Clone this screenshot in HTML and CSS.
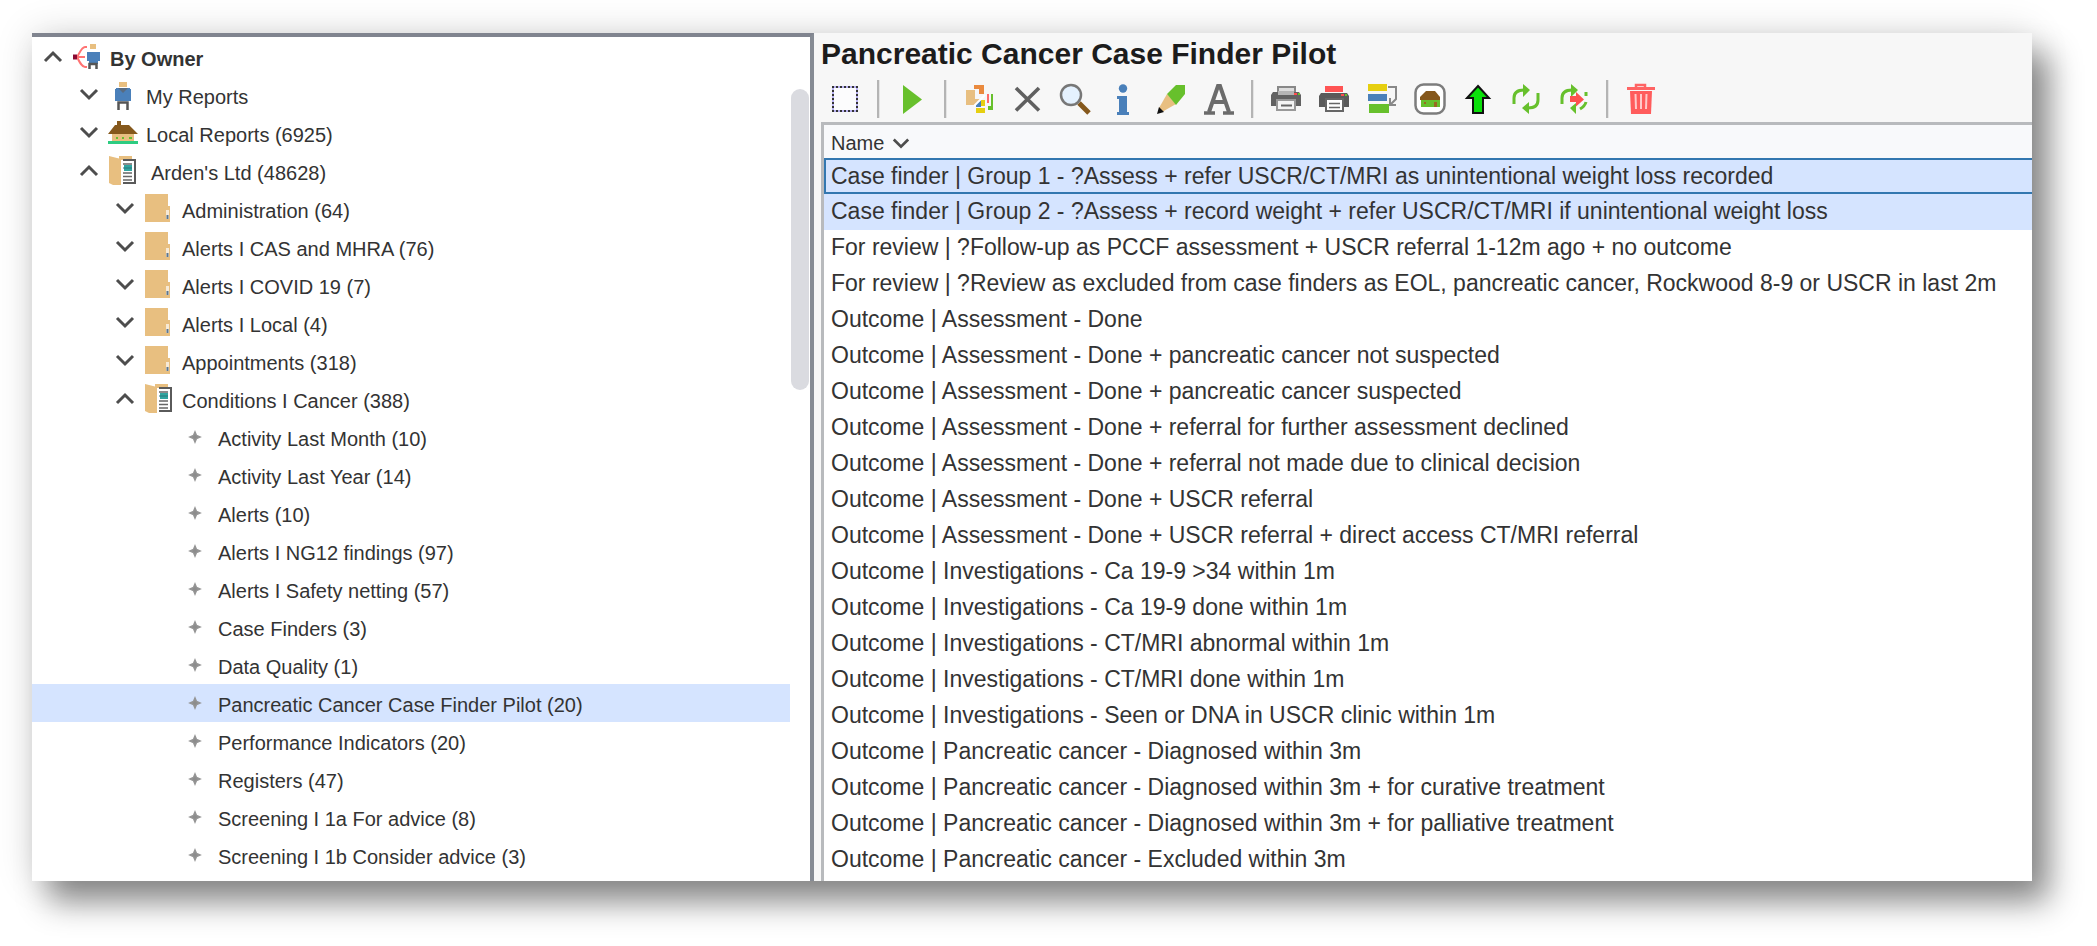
FILE: index.html
```
<!DOCTYPE html>
<html lang="en">
<head>
<meta charset="utf-8">
<title>Pancreatic Cancer Case Finder Pilot</title>
<link rel="stylesheet" href="styles.css">
</head>
<body>
<svg class="defs" aria-hidden="true">
  <symbol id="down" viewBox="0 0 20 20"><path d="M2 5l8 8 8-8" fill="none" stroke="#4d4d4d" stroke-width="3"/></symbol>
  <symbol id="up" viewBox="0 0 20 20"><path d="M2 14l8-8 8 8" fill="none" stroke="#4d4d4d" stroke-width="3"/></symbol>
  <symbol id="folder" viewBox="0 0 32 32"><path d="M2 1h23v12h2v16H2z" fill="#e8bf80"/><path d="M23 17h3v9h-3z" fill="#f7ead6"/><path d="M23.500 22h2v4h-2z" fill="#5b7690"/></symbol>
  <symbol id="open" viewBox="0 0 32 32"><path d="M12 1h13v5H12z" fill="#e8bf80"/><path d="M14 5h13v24H14z" fill="#fff"/><path d="M16 5h12v23H16" fill="none" stroke="#5a5a5a" stroke-width="2"/><path d="M2 1l12 3v26H6l-4-2z" fill="#e8bf80"/><path d="M16 9h9M16 18h9M16 21.500h9M16 25h9" stroke="#666" stroke-width="1.500"/><path d="M17 10h8v6h-8z" fill="#31a5a0"/><path d="M16 13h9" stroke="#28767a" stroke-width="1"/></symbol>
  <symbol id="leaf" viewBox="0 0 32 32"><path d="M16 11l1.500 3.500L21 16l-3.500 1.500L16 21l-1.500-3.500L11 16l3.500-1.500z" fill="#8c8c8c" stroke="#959595" stroke-width="1.500"/></symbol>
</svg>
<div class="window">
  <nav class="tree-pane" aria-label="Reports">
    <ul class="tree">
      <li class="row l0"><button class="toggle" aria-label="Collapse By Owner"><svg><use href="#up"/></svg></button><svg class="icon" viewBox="0 0 32 32"><path d="M16 6h-2c-3 0-5 5-8 10 3 6 5 10 8 10h2M6 16h8" fill="none" stroke="#ff7373" stroke-width="2"/><path d="M2 13.500h4v5H2z" fill="#8b0a32"/><path d="M19 3h6v5h-6z" fill="#e8bf80"/><path d="M16 11h13v9h-2v3h-9v-3h-2z" fill="#4a80ba"/><path d="M18.500 28v-5h7v5" fill="none" stroke="#555" stroke-width="2.500"/></svg><a class="label strong" href="#">By Owner</a></li>
      <li class="row l1"><button class="toggle" aria-label="Expand My Reports"><svg><use href="#down"/></svg></button><svg class="icon" viewBox="0 0 32 32"><path d="M12 3h8v5h-8z" fill="#e8bf80"/><path d="M9 9h14v1h1v12H8V10h1z" fill="#4a80ba"/><path d="M11 9l5 5 5-5z" fill="#596b80"/><path d="M11.500 31v-7.500h9V31" fill="none" stroke="#555" stroke-width="2.500"/></svg><a class="label" href="#">My Reports</a></li>
      <li class="row l1"><button class="toggle" aria-label="Expand Local Reports"><svg><use href="#down"/></svg></button><svg class="icon" viewBox="0 0 32 32"><path d="M5 17h22v8H5z" fill="#e8bf80"/><path d="M1 17L8 8h2V4h4v4h8l9 9z" fill="#85581c"/><path d="M9 21h2M15 21h2M22 21h3" stroke="#67bf2e" stroke-width="2"/><path d="M1 24h30v3H1z" fill="#2dcc81"/></svg><a class="label" href="#">Local Reports (6925)</a></li>
      <li class="row l1"><button class="toggle" aria-label="Collapse Arden's Ltd"><svg><use href="#up"/></svg></button><svg class="icon wide"><use href="#open"/></svg><a class="label" href="#">Arden's Ltd (48628)</a></li>
      <li class="row l2"><button class="toggle" aria-label="Expand Administration"><svg><use href="#down"/></svg></button><svg class="icon"><use href="#folder"/></svg><a class="label" href="#">Administration (64)</a></li>
      <li class="row l2"><button class="toggle" aria-label="Expand Alerts I CAS and MHRA"><svg><use href="#down"/></svg></button><svg class="icon"><use href="#folder"/></svg><a class="label" href="#">Alerts I CAS and MHRA (76)</a></li>
      <li class="row l2"><button class="toggle" aria-label="Expand Alerts I COVID 19"><svg><use href="#down"/></svg></button><svg class="icon"><use href="#folder"/></svg><a class="label" href="#">Alerts I COVID 19 (7)</a></li>
      <li class="row l2"><button class="toggle" aria-label="Expand Alerts I Local"><svg><use href="#down"/></svg></button><svg class="icon"><use href="#folder"/></svg><a class="label" href="#">Alerts I Local (4)</a></li>
      <li class="row l2"><button class="toggle" aria-label="Expand Appointments"><svg><use href="#down"/></svg></button><svg class="icon"><use href="#folder"/></svg><a class="label" href="#">Appointments (318)</a></li>
      <li class="row l2"><button class="toggle" aria-label="Collapse Conditions I Cancer"><svg><use href="#up"/></svg></button><svg class="icon"><use href="#open"/></svg><a class="label" href="#">Conditions I Cancer (388)</a></li>
      <li class="row l3"><svg class="icon"><use href="#leaf"/></svg><a class="label" href="#">Activity Last Month (10)</a></li>
      <li class="row l3"><svg class="icon"><use href="#leaf"/></svg><a class="label" href="#">Activity Last Year (14)</a></li>
      <li class="row l3"><svg class="icon"><use href="#leaf"/></svg><a class="label" href="#">Alerts (10)</a></li>
      <li class="row l3"><svg class="icon"><use href="#leaf"/></svg><a class="label" href="#">Alerts I NG12 findings (97)</a></li>
      <li class="row l3"><svg class="icon"><use href="#leaf"/></svg><a class="label" href="#">Alerts I Safety netting (57)</a></li>
      <li class="row l3"><svg class="icon"><use href="#leaf"/></svg><a class="label" href="#">Case Finders (3)</a></li>
      <li class="row l3"><svg class="icon"><use href="#leaf"/></svg><a class="label" href="#">Data Quality (1)</a></li>
      <li class="row l3 current"><svg class="icon"><use href="#leaf"/></svg><a class="label" href="#" aria-current="true">Pancreatic Cancer Case Finder Pilot (20)</a></li>
      <li class="row l3"><svg class="icon"><use href="#leaf"/></svg><a class="label" href="#">Performance Indicators (20)</a></li>
      <li class="row l3"><svg class="icon"><use href="#leaf"/></svg><a class="label" href="#">Registers (47)</a></li>
      <li class="row l3"><svg class="icon"><use href="#leaf"/></svg><a class="label" href="#">Screening I 1a For advice (8)</a></li>
      <li class="row l3"><svg class="icon"><use href="#leaf"/></svg><a class="label" href="#">Screening I 1b Consider advice (3)</a></li>
    </ul>
    <div class="scroll"><div class="thumb"></div></div>
  </nav>
  <main class="content">
    <h1 class="title">Pancreatic Cancer Case Finder Pilot</h1>
    <div class="toolbar" role="toolbar" aria-label="Report actions">
      <button class="tool" aria-label="Select"><svg viewBox="0 0 32 32"><path d="M4 4h24v24H4z" fill="#fcfcfd" stroke="#b9b2f2" stroke-width="2"/><path d="M3 4h26M3 28h26M4 3v26M28 3v26" fill="none" stroke="#333" stroke-width="2" stroke-dasharray="2 2"/></svg></button>
      <span class="sep"></span>
      <button class="tool" aria-label="Run"><svg viewBox="0 0 32 32"><path d="M7 2l19 14.500L7 31z" fill="#67c02c"/></svg></button>
      <span class="sep"></span>
      <button class="tool" aria-label="Breakdown"><svg viewBox="0 0 32 32"><path d="M11 2h10v9h-5V6h-5z" fill="#ea8a3e"/><path d="M3 7h9v9h6l-6 6H3z" fill="#e8bf80"/><path d="M13 25h9v5h-9zM18 17h4v6h-4z" fill="#e6cf10"/><path d="M13 24v-4l5-4v8z" fill="#4a80ba"/><path d="M11 23l11-11" stroke="#fff" stroke-width="2"/><path d="M24 11h2v9h-2z" fill="#ff6b6b"/><path d="M28 11h2v16h-5v-4h3z" fill="#67c02c"/></svg></button>
      <button class="tool" aria-label="Remove"><svg viewBox="0 0 32 32"><path d="M5 5l23 22.500M28 5L5 27.500" stroke="#606060" stroke-width="3.600"/></svg></button>
      <button class="tool" aria-label="Search"><svg viewBox="0 0 32 32"><path d="M20 20l10 10" stroke="#85581c" stroke-width="5"/><circle cx="12" cy="12" r="10" fill="#e4f1fe" stroke="#777" stroke-width="2.500"/></svg></button>
      <button class="tool" aria-label="Information"><svg viewBox="0 0 32 32"><circle cx="16" cy="5.500" r="4.200" fill="#4a80ba"/><path d="M10 13h10v16h2v3H10v-3h2V16h-2z" fill="#4a80ba"/></svg></button>
      <button class="tool" aria-label="Edit"><svg viewBox="0 0 32 32"><path d="M4 25l8-14 9 10-14 8z" fill="#e8bf80"/><path d="M12 11l9-9h9v9l-9 11z" fill="#67c02c"/><path d="M2 31l2-7 5 5z" fill="#111"/></svg></button>
      <button class="tool" aria-label="Font"><svg viewBox="0 0 32 32"><path d="M6 29L15 3h2l9 26M10 19h12" fill="none" stroke="#6b6b6b" stroke-width="4"/><path d="M1 30h11M20 30h11" stroke="#6b6b6b" stroke-width="3.500"/></svg></button>
      <span class="sep"></span>
      <button class="tool" aria-label="Print"><svg viewBox="0 0 32 32"><path d="M8 10V4h17v6" fill="#ddd" stroke="#888" stroke-width="2"/><path d="M3 9h26l2 3v11H1V12z" fill="#626262"/><path d="M8 8h16v4H8z" fill="#b5b5b5"/><path d="M24 10h3v2h-3z" fill="#ff4d4d"/><path d="M28 10h2v2h-2z" fill="#67c02c"/><path d="M7 17h18v10H7z" fill="#f4f4f4" stroke="#999" stroke-width="2"/><path d="M11 22.500h11" stroke="#666" stroke-width="2"/></svg></button>
      <button class="tool" aria-label="Print selection"><svg viewBox="0 0 32 32"><path d="M7 3h18v6H7z" fill="#ff5454"/><path d="M3 10h26l2 3v11H1V13z" fill="#5a5a5a"/><path d="M23 11h3v2h-3z" fill="#ff4d4d"/><path d="M27 11h2v2h-2z" fill="#67c02c"/><path d="M8 16h17v12H8z" fill="#fff" stroke="#666" stroke-width="2"/><path d="M11 20.500h11M11 24.500h11" stroke="#666" stroke-width="1.500"/></svg></button>
      <button class="tool" aria-label="Order columns"><svg viewBox="0 0 32 32"><path d="M2 1h19v7H2z" fill="#e6cf10"/><path d="M2 11h19v7H2z" fill="#4a80ba"/><path d="M3 21h20v9H3z" fill="#67c02c"/><path d="M22 4h8v12l-5 5M24 15v7h6" fill="none" stroke="#888" stroke-width="2"/></svg></button>
      <button class="tool" aria-label="Organisation"><svg viewBox="0 0 32 32"><rect x="1.500" y="1.500" width="29" height="29" rx="8" fill="#fff" stroke="#7d7d7d" stroke-width="2.500"/><path d="M7 15h19v9H7z" fill="#67c02c"/><path d="M6 14l6-6h9l5 6v3H6z" fill="#85581c"/><path d="M20 19h3v5h-3zM10 19h2v2h-2z" fill="#9a6a20"/></svg></button>
      <button class="tool" aria-label="Move up"><svg viewBox="0 0 32 32"><path d="M16 3l11 12h-6v15H11V15H5z" fill="#0ae00a" stroke="#111" stroke-width="2"/></svg></button>
      <button class="tool" aria-label="Refresh"><svg viewBox="0 0 32 32"><path d="M4 21v-6q0-8 10-8M28 10v7q0 8-10 8" fill="none" stroke="#67c02c" stroke-width="3"/><path d="M13 1l7 6-7 7zM19 19l-7 6 7 6z" fill="#67c02c"/></svg></button>
      <button class="tool" aria-label="Refresh and send"><svg viewBox="0 0 32 32"><path d="M4 21v-6q0-8 10-8M28 9v4M28 19q-1 4-6 7" fill="none" stroke="#67c02c" stroke-width="3"/><path d="M13 1l7 6-7 7zM18 20l-6 5 6 6z" fill="#67c02c"/><path d="M12 13h6V9l8 7.500-8 7V19h-6z" fill="#ff5050"/></svg></button>
      <span class="sep"></span>
      <button class="tool" aria-label="Delete"><svg viewBox="0 0 32 32"><path d="M11 4V2h9v2" fill="none" stroke="#ff6464" stroke-width="2.500"/><path d="M2 4h28v3H2z" fill="#ff6464"/><path d="M5 8h22l-1 23H6z" fill="#ff5c5c"/><path d="M10.500 11l.5 15M16 11v15M21.500 11l-.5 15" stroke="#ffc9c9" stroke-width="2"/></svg></button>
    </div>
    <table class="list">
      <thead><tr><th scope="col"><button class="sort">Name<svg viewBox="0 0 20 20"><use href="#down"/></svg></button></th></tr></thead>
      <tbody>
        <tr class="selected focused"><td>Case finder | Group 1 - ?Assess + refer USCR/CT/MRI as unintentional weight loss recorded</td></tr>
        <tr class="selected"><td>Case finder | Group 2 - ?Assess + record weight + refer USCR/CT/MRI if unintentional weight loss</td></tr>
        <tr><td>For review | ?Follow-up as PCCF assessment + USCR referral 1-12m ago + no outcome</td></tr>
        <tr><td>For review | ?Review as excluded from case finders as EOL, pancreatic cancer, Rockwood 8-9 or USCR in last 2m</td></tr>
        <tr><td>Outcome | Assessment - Done</td></tr>
        <tr><td>Outcome | Assessment - Done + pancreatic cancer not suspected</td></tr>
        <tr><td>Outcome | Assessment - Done + pancreatic cancer suspected</td></tr>
        <tr><td>Outcome | Assessment - Done + referral for further assessment declined</td></tr>
        <tr><td>Outcome | Assessment - Done + referral not made due to clinical decision</td></tr>
        <tr><td>Outcome | Assessment - Done + USCR referral</td></tr>
        <tr><td>Outcome | Assessment - Done + USCR referral + direct access CT/MRI referral</td></tr>
        <tr><td>Outcome | Investigations - Ca 19-9 &gt;34 within 1m</td></tr>
        <tr><td>Outcome | Investigations - Ca 19-9 done within 1m</td></tr>
        <tr><td>Outcome | Investigations - CT/MRI abnormal within 1m</td></tr>
        <tr><td>Outcome | Investigations - CT/MRI done within 1m</td></tr>
        <tr><td>Outcome | Investigations - Seen or DNA in USCR clinic within 1m</td></tr>
        <tr><td>Outcome | Pancreatic cancer - Diagnosed within 3m</td></tr>
        <tr><td>Outcome | Pancreatic cancer - Diagnosed within 3m + for curative treatment</td></tr>
        <tr><td>Outcome | Pancreatic cancer - Diagnosed within 3m + for palliative treatment</td></tr>
        <tr><td>Outcome | Pancreatic cancer - Excluded within 3m</td></tr>
      </tbody>
    </table>
  </main>
</div>
</body>
</html>
```
FILE: styles.css
```
* { box-sizing: border-box; }
body {
  margin: 0;
  padding: 33px 65px 65px 32px;
  background: #fff;
  color: #333;
  font-family: "Liberation Sans", Arial, sans-serif;
  font-size: 20px;
}
.defs { position: absolute; width: 0; height: 0; }
button {
  display: flex;
  align-items: center;
  padding: 0;
  border: 0;
  background: none;
  color: inherit;
  font: inherit;
}
.window {
  display: grid;
  grid-template-columns: 391fr 609fr;
  background: #f7f7f7;
  box-shadow: 17px 21px 30px rgba(0, 0, 0, .44), 0 0 36px rgba(0, 0, 0, .14);
}
.tree-pane {
  display: flex;
  border-top: 4px solid #80848f;
  border-right: 4px solid #868b94;
  background: #fff;
}
.tree {
  flex: 1;
  min-width: 0;
  margin: 0;
  padding: 1px 0 6px;
  list-style: none;
}
.row {
  display: flex;
  align-items: center;
  height: 38px;
  padding-left: 11px;
}
.l1 { padding-left: 47px; }
.l2 { padding-left: 83px; }
.l3 { padding-left: 147px; }
.current { background: #d5e4ff; }
.toggle { width: 20px; height: 20px; margin-right: 8px; }
.toggle svg { width: 20px; height: 20px; }
.icon { flex: none; width: 32px; height: 32px; margin-right: 7px; }
.wide { margin-right: 12px; }
.label {
  padding-top: 4px;
  color: inherit;
  text-decoration: none;
  white-space: nowrap;
}
.strong { font-weight: bold; }
.scroll { width: 20px; padding: 52px 1px 0; }
.thumb { height: 301px; border-radius: 9px; background: #dadbe0; }
.content { min-width: 0; padding-left: 7px; }
.title {
  margin: 0;
  color: #1c1c1c;
  font-size: 30px;
  line-height: 42px;
}
.toolbar {
  display: flex;
  align-items: center;
  gap: 16px;
  height: 47px;
  padding-left: 8px;
}
.tool, .tool svg { width: 32px; height: 32px; }
.sep {
  width: 3px;
  height: 38px;
  border-right: 1px solid #e4e4e4;
  background: #b4b4b4;
}
.list {
  width: 100%;
  border: solid #b8babd;
  border-width: 3px 0 0 3px;
  border-spacing: 0;
  background: #fff;
}
.list th {
  height: 33px;
  padding: 4px 7px 0;
  background: #f8f9fb;
  font-weight: normal;
}
.sort { gap: 8px; }
.sort svg { width: 18px; height: 18px; }
.list td {
  height: 36px;
  padding: 0 7px 2px;
  font-size: 23px;
  line-height: 32px;
  white-space: nowrap;
}
.selected td { background: #d5e4ff; }
.focused td {
  border: solid #3277b0;
  border-width: 2px 0 2px 2px;
  padding: 0 7px 0 5px;
}
.list tbody tr:last-child td { height: 39px; padding-bottom: 5px; }
```
